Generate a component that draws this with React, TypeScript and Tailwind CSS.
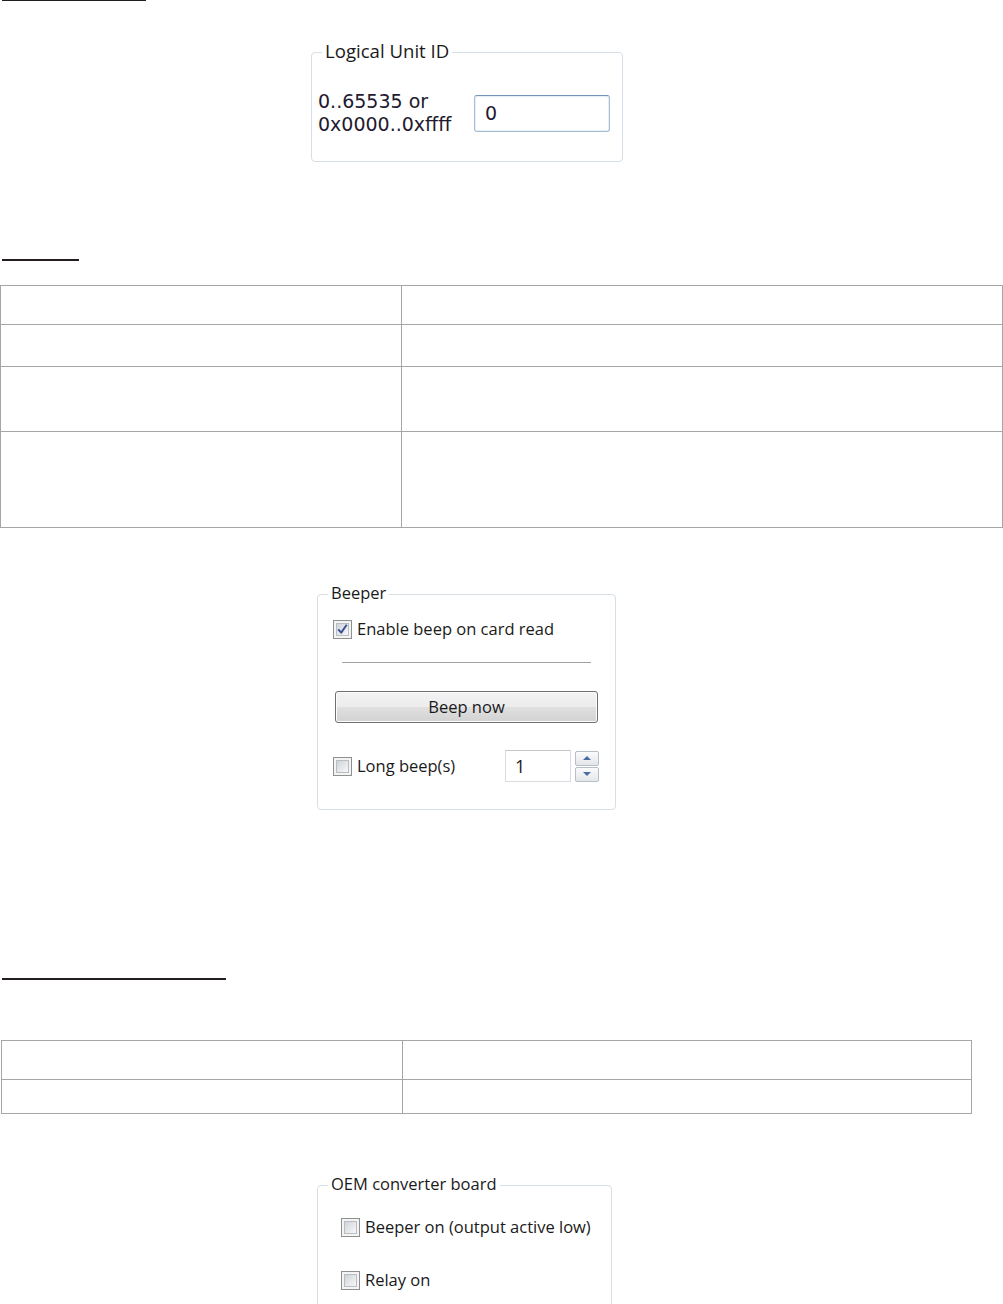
import type { ReactNode } from "react";

const ui = "font-['Open_Sans',sans-serif] text-[16.5px] text-[#1a1a1a]";
const tahoma = "font-['DejaVu_Sans',sans-serif] text-[19px] text-[#221a2e]";

function GroupBox({ title, big, className, children }: { title: string; big?: boolean; className: string; children: ReactNode }) {
  return (
    <div className={`relative rounded-[4px] border border-[#d5dfe5] ${className}`}>
      <span
        className={`absolute left-[10px] bg-white px-[3px] font-['Open_Sans',sans-serif] text-[#1a1a1a] ${
          big ? "-top-[16px] text-[18.6px] leading-[27px]" : "-top-[14px] text-[16.5px] leading-[24px]"
        }`}
      >
        {title}
      </span>
      {children}
    </div>
  );
}

function Check({ checked = false }: { checked?: boolean }) {
  return (
    <span className="flex h-[19px] w-[19px] shrink-0 border border-[#8e8f8f] bg-[#f4f4f4] p-[2px]">
      <span className="flex h-full w-full items-center justify-center border border-[#b9bec4] bg-gradient-to-br from-[#cfd3d8] via-[#e4e6e9] to-[#f7f7f7]">
        {checked && (
          <svg viewBox="0 0 12 12" className="h-[14px] w-[14px]">
            <path d="M1.4 6.4 L4.6 10 L10.6 1.4" fill="none" stroke="#3b4f96" strokeWidth="2.1" strokeLinejoin="round" />
          </svg>
        )}
      </span>
    </span>
  );
}

function SpinArrow({ up }: { up?: boolean }) {
  return (
    <span className="flex h-[15px] w-[24px] items-center justify-center rounded-[2px] border border-[#b5bec9] bg-gradient-to-b from-[#fbfbfb] to-[#e3e6ea]">
      <svg viewBox="0 0 8 4" className="h-[4px] w-[8px]">
        <path d={up ? "M0 4 L4 0 L8 4 Z" : "M0 0 L4 4 L8 0 Z"} fill="#4b6aa8" />
      </svg>
    </span>
  );
}

const table1 = ["h-[39px] border-b", "h-[42px] border-b", "h-[65px] border-b", "h-[95px]"];
const table2 = ["h-[39px] border-b", "h-[33px]"];

export default function App() {
  return (
    <main className="h-[1304px] w-[1003px] overflow-hidden bg-white">
      <div className="flex flex-col items-start">
        <div className="ml-[2px] h-[1px] w-[144px] bg-[#231f20]" />

        <GroupBox title="Logical Unit ID" big className="ml-[311px] mt-[51px] h-[110px] w-[312px]">
          <div className="flex h-full items-center pl-[6px] pt-[12px]">
            <div className={`w-[156px] leading-[23px] ${tahoma}`}>
              <p>0..65535 or</p>
              <p>0x0000..0xffff</p>
            </div>
            <div className={`flex h-[37px] w-[136px] items-center rounded-[3px] border border-[#a7bdd6] border-t-[#7394bb] pl-[10px] shadow-[inset_0_0_0_1px_#e6eef7] ${tahoma}`}>
              0
            </div>
          </div>
        </GroupBox>

        <div className="ml-[2px] mt-[97px] h-[2px] w-[77px] bg-[#231f20]" />

        <div className="mt-[24px] w-[1003px] border border-[#a6a6a6]">
          {table1.map((row, i) => (
            <div key={i} className={`flex border-[#a6a6a6] ${row}`}>
              <div className="w-[401px] border-r border-[#a6a6a6]" />
              <div className="flex-1" />
            </div>
          ))}
        </div>

        <GroupBox title="Beeper" className="ml-[317px] mt-[66px] h-[216px] w-[299px]">
          <div className="flex flex-col items-start pt-[22px]">
            <label className={`ml-[15px] flex h-[24px] items-center gap-[5px] ${ui}`}>
              <Check checked />
              Enable beep on card read
            </label>
            <div className="ml-[24px] mt-[21px] h-[1px] w-[249px] bg-[#a0a0a0] shadow-[0_1px_0_#ffffff]" />
            <button className={`ml-[17px] mt-[28px] h-[32px] w-[263px] rounded-[3px] border border-[#707070] bg-[linear-gradient(#f3f3f3_0%,#ececec_50%,#e0e0e0_50%,#d2d2d2_100%)] shadow-[inset_0_0_0_1px_#fcfcfc] ${ui}`}>
              Beep now
            </button>
            <div className="mt-[27px] flex h-[32px] items-center">
              <label className={`ml-[15px] flex w-[172px] items-center gap-[5px] ${ui}`}>
                <Check />
                Long beep(s)
              </label>
              <div className={`flex h-[32px] w-[66px] items-center border border-[#dadcdf] border-t-[#c3c6ca] pl-[9px] text-[18px] ${ui}`}>
                1
              </div>
              <div className="ml-[4px] flex flex-col gap-[1px]">
                <SpinArrow up />
                <SpinArrow />
              </div>
            </div>
          </div>
        </GroupBox>

        <div className="ml-[2px] mt-[168px] h-[2px] w-[224px] bg-[#231f20]" />

        <div className="ml-[1px] mt-[60px] w-[971px] border border-[#a6a6a6]">
          {table2.map((row, i) => (
            <div key={i} className={`flex border-[#a6a6a6] ${row}`}>
              <div className="w-[401px] border-r border-[#a6a6a6]" />
              <div className="flex-1" />
            </div>
          ))}
        </div>

        <GroupBox title="OEM converter board" className="ml-[317px] mt-[71px] h-[160px] w-[295px]">
          <div className="flex flex-col items-start pt-[29px]">
            <label className={`ml-[23px] flex h-[24px] items-center gap-[5px] ${ui}`}>
              <Check />
              Beeper on (output active low)
            </label>
            <label className={`ml-[23px] mt-[29px] flex h-[24px] items-center gap-[5px] ${ui}`}>
              <Check />
              Relay on
            </label>
          </div>
        </GroupBox>
      </div>
    </main>
  );
}
